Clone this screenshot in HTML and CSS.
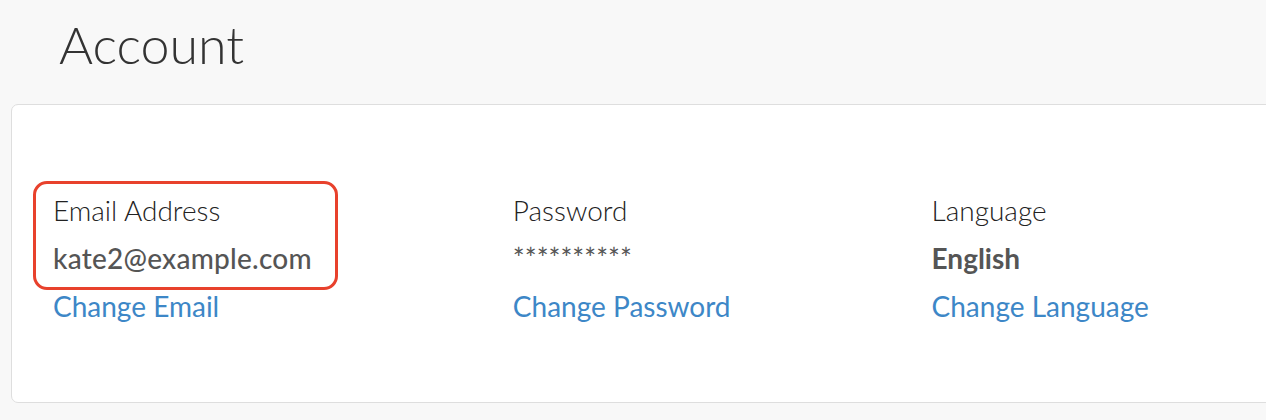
FILE: index.html
```html
<!DOCTYPE html>
<html lang="en">
<head>
<meta charset="utf-8">
<title>Account</title>
<link rel="stylesheet" href="styles.css">
</head>
<body>
  <h1 class="page-title">Account</h1>
  <section class="card">
    <div class="fields">
      <div class="field">
        <div class="highlight">
          <div class="field-label">Email Address</div>
          <div class="field-value">kate2@example.com</div>
        </div>
        <a class="field-link" href="#">Change Email</a>
      </div>
      <div class="field">
        <div class="field-label">Password</div>
        <div class="field-value masked">**********</div>
        <a class="field-link" href="#">Change Password</a>
      </div>
      <div class="field">
        <div class="field-label">Language</div>
        <div class="field-value strong">English</div>
        <a class="field-link" href="#">Change Language</a>
      </div>
    </div>
  </section>
</body>
</html>
```

FILE: styles.css
```css
html, body {
  margin: 0;
  padding: 0;
}
body {
  background: #f8f8f8;
  font-family: "Lato", "Open Sans", "Liberation Sans", sans-serif;
  overflow: hidden;
}
.page-title {
  margin: 14px 0 30px 59px;
  font-size: 52px;
  line-height: 60px;
  font-weight: 300;
  color: #333;
}
.card {
  margin-left: 11px;
  margin-right: -20px;
  background: #fff;
  border: 1px solid #dedede;
  border-radius: 7px;
  padding: 81px 0 72px 41px;
}
.fields {
  display: flex;
  gap: 201px;
}
.field {
  display: flex;
  flex-direction: column;
  align-items: flex-start;
}
.highlight {
  position: relative;
}
.highlight::before {
  content: "";
  position: absolute;
  top: -5px;
  bottom: -8px;
  left: -20px;
  right: -26px;
  border: 3px solid #e8412c;
  border-radius: 14px;
}
.field-label {
  font-size: 28px;
  line-height: 48px;
  font-weight: 300;
  color: #222;
}
.field-value {
  font-size: 28px;
  line-height: 48px;
  font-weight: 500;
  letter-spacing: 0.24px;
  color: #555;
}
.field-value.strong {
  font-weight: 700;
  letter-spacing: 0;
}
.field-value.masked {
  font-weight: 400;
  letter-spacing: 0;
}
.field-link {
  font-size: 28px;
  line-height: 48px;
  color: #3d87c7;
  text-decoration: none;
}
```
